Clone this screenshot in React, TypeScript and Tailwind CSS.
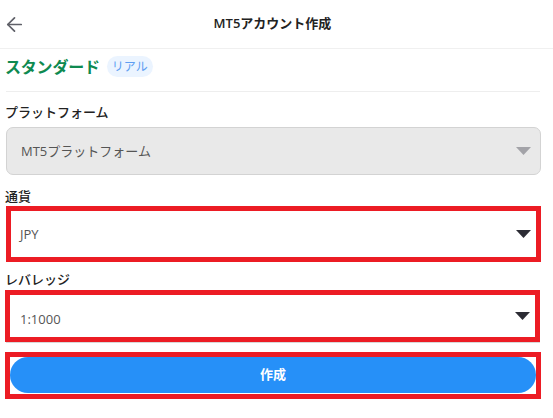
import React from 'react';
import { ArrowLeft } from 'lucide-react';

const FONT = "font-['Open_Sans','Noto_Sans_CJK_JP',sans-serif]";

const Caret: React.FC<{ color: string }> = ({ color }) => (
  <svg width="15" height="8" viewBox="0 0 15 8" className="shrink-0">
    <path d="M0 0 L15 0 L7.5 8 Z" fill={color} />
  </svg>
);

export default function App() {
  return (
    <div className={`w-[553px] h-[418px] bg-white text-[#222] ${FONT}`}>
      {/* header */}
      <div className="h-[49px] border-b border-[#f0f0f0]">
        <div className="w-[545px] h-[48px] flex items-center pl-[3px] pr-[3px]">
          <div className="w-[24px] flex items-center">
            <ArrowLeft size={23} strokeWidth={1.8} color="#5f6068" />
          </div>
          <div className="flex-1 text-center text-[13px] font-semibold">MT5アカウント作成</div>
          <div className="w-[24px]" />
        </div>
      </div>

      <div className="w-[536px] ml-[5px]">
        {/* account type */}
        <div className="h-[42px] flex items-center gap-[7px] pb-[7px]">
          <span className="text-[16px] font-bold text-[#0e8a50] tracking-[-0.2px]">スタンダード</span>
          <span className="h-[21px] px-[5px] rounded-full bg-[#ebf4ff] text-[#5e9ef2] text-[12px] flex items-center">リアル</span>
        </div>
        <div className="h-px bg-[#eeeeee] ml-px mr-px" />

        {/* platform */}
        <div className="h-[20px] mt-[11px] flex items-center text-[13px] font-medium">プラットフォーム</div>
        <div className="mt-[4px] ml-px h-[48px] rounded-[7px] border border-[#d3d3d3] bg-[#e9e9e9] flex items-center justify-between pl-[14px] pr-[9px]">
          <span className="text-[13px] text-[#555] pt-[2px]">MT5プラットフォーム</span>
          <Caret color="#a3a3a8" />
        </div>

        {/* currency */}
        <div className="h-[19px] mt-[12px] flex items-center text-[13px] font-medium">通貨</div>
        <div className="ml-px h-[56px] border-[5px] border-[#ec1c24] bg-white flex items-center justify-between pl-[9px] pr-[5px]">
          <span className="text-[13px] text-[#555] pt-[2px]">JPY</span>
          <Caret color="#2c2c34" />
        </div>

        {/* leverage */}
        <div className="h-[20px] mt-[8px] flex items-center text-[13px] font-medium">レバレッジ</div>
        <div className="h-[52px] w-[535px] border-[5px] border-[#ec1c24] bg-white flex items-center justify-between pl-[10px] pr-[5px]">
          <span className="text-[13px] text-[#555] pt-[8px]">1:1000</span>
          <Caret color="#2c2c34" />
        </div>
        <div className="h-px w-[534px] ml-px bg-[#d8d8d8]" />

        {/* submit */}
        <div className="mt-[9px] h-[47px] border-[5px] border-[#ec1c24] bg-white">
          <button className="w-full h-[36px] rounded-full bg-[#2690f8] text-white text-[13px] font-bold flex items-center justify-center">
            作成
          </button>
        </div>
      </div>
    </div>
  );
}
